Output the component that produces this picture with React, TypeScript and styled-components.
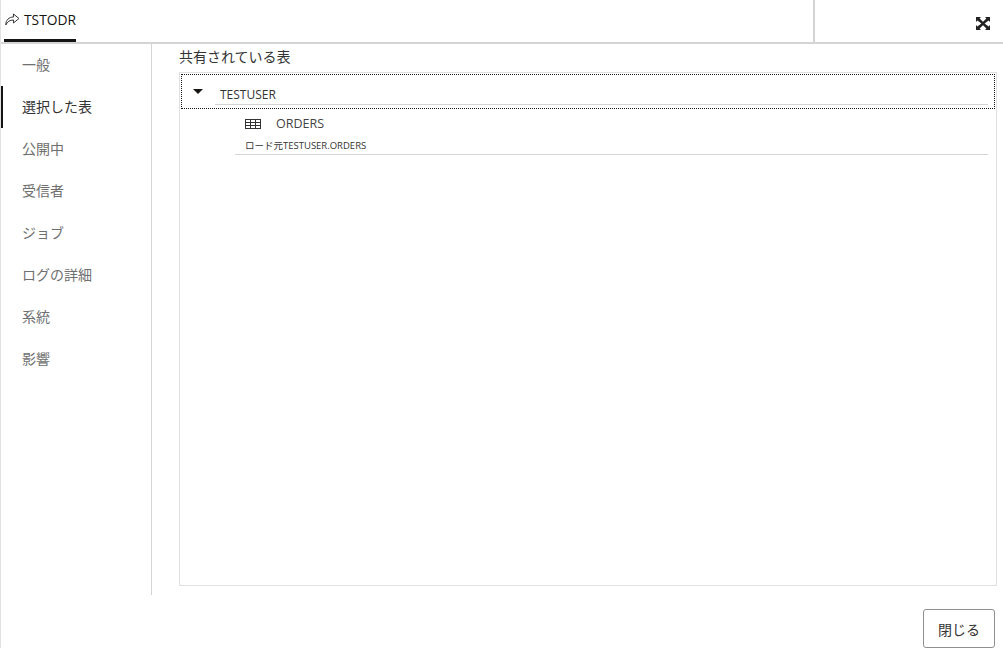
import React, { VFC } from 'react'
import styled, { createGlobalStyle } from 'styled-components'

const menuItems = ['一般', '選択した表', '公開中', '受信者', 'ジョブ', 'ログの詳細', '系統', '影響']

const fontStack = `"Open Sans", "Noto Sans CJK JP", sans-serif`

const GlobalStyle = createGlobalStyle`
  html, body {
    margin: 0;
    padding: 0;
    background: #fff;
    font-family: ${fontStack};
  }
`

const ShareIcon: VFC = () => (
  <svg width="15" height="13" viewBox="0 0 15 13" fill="none" stroke="#333" strokeWidth="1">
    <path d="M0.8 12 C0.8 7 4 4 8.5 4 V1 L14 5.5 L8.5 10 V7 C5 7 2.5 8.5 0.8 12 Z" />
  </svg>
)

const ExpandIcon: VFC = () => (
  <svg width="16" height="15" viewBox="0 0 16 15" fill="#222">
    <path d="M1 1 H6 L4.6 2.4 L8 5.8 L11.4 2.4 L10 1 H15 V6 L13.6 4.5 L9.6 7.5 L13.6 10.5 L15 9 V14 H10 L11.4 12.6 L8 9.2 L4.6 12.6 L6 14 H1 V9 L2.4 10.5 L6.4 7.5 L2.4 4.5 L1 6 Z" />
  </svg>
)

const TableIcon: VFC = () => (
  <svg width="16" height="10" viewBox="0 0 16 10" fill="none" stroke="#333" strokeWidth="1" shapeRendering="crispEdges">
    <rect x="0.5" y="0.5" width="15" height="9" />
    <path d="M0 3.5 H16 M0 6.5 H16 M5.5 0 V10 M10.5 0 V10" />
  </svg>
)

export default function App() {
  return (
    <>
      <GlobalStyle />
      <Page>
        <Header>
          <TabArea>
            <Tab>
              <ShareIcon />
              <TabLabel>TSTODR</TabLabel>
            </Tab>
          </TabArea>
          <HeaderActions>
            <ExpandIcon />
          </HeaderActions>
        </Header>
        <Body>
          <Sidebar>
            {menuItems.map((item, i) => (
              <MenuItem key={item} $active={i === 1}>
                {item}
              </MenuItem>
            ))}
          </Sidebar>
          <Content>
            <Title>共有されている表</Title>
            <TreePanel>
              <SchemaRow>
                <Caret />
                <SchemaName>TESTUSER</SchemaName>
              </SchemaRow>
              <TableItem>
                <TableName>
                  <TableIcon />
                  <span>ORDERS</span>
                </TableName>
                <TableSource>ロード元TESTUSER.ORDERS</TableSource>
              </TableItem>
            </TreePanel>
          </Content>
        </Body>
        <Footer>
          <CloseButton>閉じる</CloseButton>
        </Footer>
      </Page>
    </>
  )
}

const Page = styled.div`
  display: flex;
  flex-direction: column;
  width: 1003px;
  height: 648px;
  box-sizing: border-box;
  border-left: 1px solid #e2e2e2;
  overflow: hidden;
`

const Header = styled.header`
  display: flex;
  flex: none;
  height: 44px;
  box-sizing: border-box;
  border-bottom: 2px solid #d4d4d4;
`

const TabArea = styled.div`
  flex: 1;
  display: flex;
  padding-left: 3px;
`

const Tab = styled.div`
  display: flex;
  align-items: center;
  gap: 4px;
  width: 72px;
  height: 42px;
  box-sizing: border-box;
  padding: 0 0 1px 1px;
  border-bottom: 3px solid #161513;
`

const TabLabel = styled.span`
  font-size: 13.8px;
  font-weight: 500;
  color: #161513;
`

const HeaderActions = styled.div`
  display: flex;
  align-items: flex-end;
  justify-content: flex-end;
  width: 190px;
  height: 42px;
  box-sizing: border-box;
  padding: 0 12px 11px 0;
  border-left: 2px solid #d4d4d4;
`

const Body = styled.div`
  display: flex;
  flex: none;
  height: 551px;
`

const Sidebar = styled.nav`
  width: 151px;
  flex: none;
  box-sizing: border-box;
  border-right: 1px solid #d4d4d4;
`

const MenuItem = styled.div<{ $active: boolean }>`
  display: flex;
  align-items: center;
  height: 42px;
  box-sizing: border-box;
  padding: 0 0 2px 21px;
  font-size: 14px;
  color: ${({ $active }) => ($active ? '#333' : '#6f6f6f')};
  box-shadow: ${({ $active }) => ($active ? 'inset 2px 0 0 #161513' : 'none')};
`

const Content = styled.main`
  flex: 1;
  display: flex;
  flex-direction: column;
  padding: 0 6px 9px 27px;
`

const Title = styled.h2`
  flex: none;
  height: 28px;
  margin: 0;
  font-size: 14px;
  font-weight: 400;
  line-height: 25px;
  color: #333;
`

const TreePanel = styled.div`
  flex: 1;
  box-sizing: border-box;
  border: 1px solid #e0e0e0;
  padding: 1px;
`

const SchemaRow = styled.div`
  position: relative;
  display: flex;
  height: 35px;
  box-sizing: border-box;
  outline: 1px dotted #161513;
  outline-offset: -1px;
  padding: 0 7px 0 34px;
`

const Caret = styled.span`
  position: absolute;
  left: 12px;
  top: 15px;
  border-style: solid;
  border-width: 5px 5px 0;
  border-color: #161513 transparent transparent;
`

const SchemaName = styled.div`
  flex: 1;
  height: 31px;
  padding: 12px 0 0 5px;
  box-sizing: border-box;
  border-bottom: 1px solid #d4d4d4;
  font-size: 12px;
  line-height: 18px;
  color: #333;
`

const TableItem = styled.div`
  margin: 0 7px 0 54px;
  border-bottom: 1px solid #d4d4d4;
  height: 46px;
  box-sizing: border-box;
  padding-left: 10px;
`

const TableName = styled.div`
  display: flex;
  align-items: center;
  gap: 15px;
  height: 29px;
  font-size: 12.5px;
  color: #444;
`

const TableSource = styled.div`
  font-size: 9.5px;
  line-height: 15px;
  color: #333;
`

const Footer = styled.footer`
  flex: 1;
  display: flex;
  justify-content: flex-end;
  align-items: flex-start;
  padding: 14px 8px 0 0;
`

const CloseButton = styled.button`
  width: 72px;
  height: 39px;
  box-sizing: border-box;
  background: #fff;
  border: 1px solid #8f8f8f;
  border-radius: 3px;
  font-family: ${fontStack};
  font-size: 14px;
  color: #333;
  padding: 0;
`
